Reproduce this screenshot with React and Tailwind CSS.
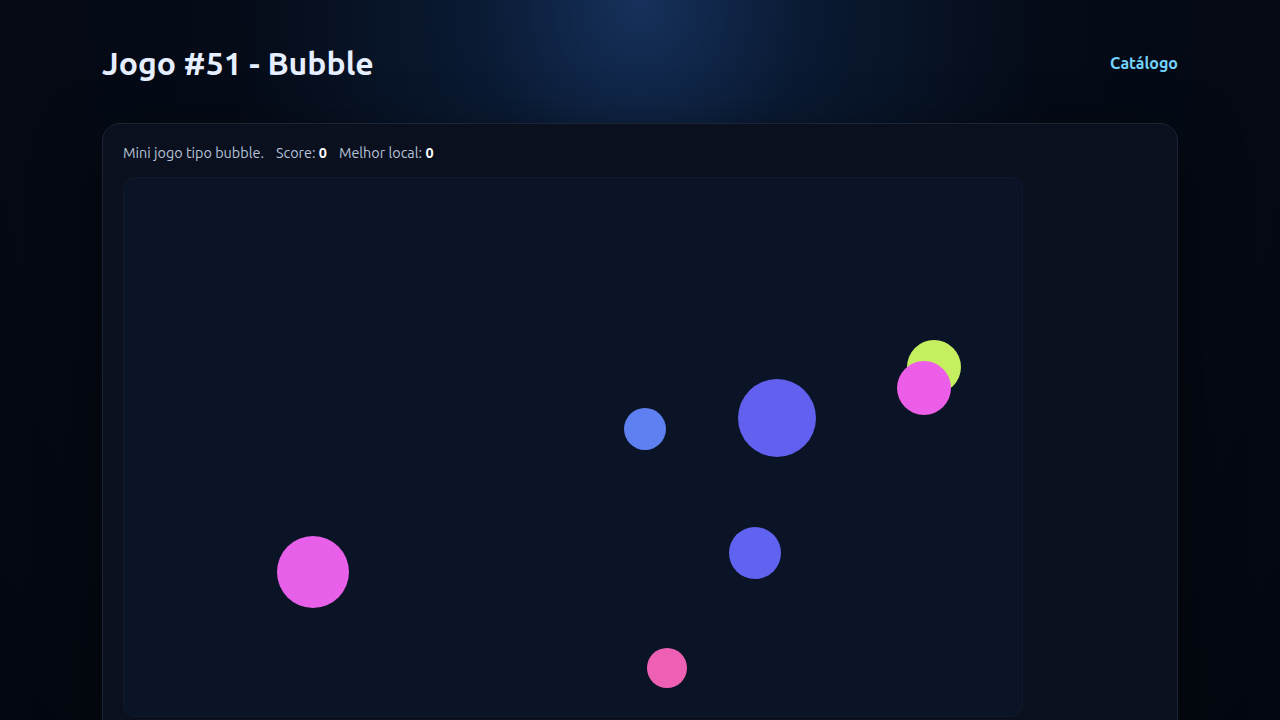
const bubbles = [
  { x: 189, y: 394, r: 36, c: '#e85fe9' },
  { x: 521, y: 251, r: 21, c: '#5f80f1' },
  { x: 653, y: 240, r: 39, c: '#6260ef' },
  { x: 810, y: 189, r: 27, c: '#c5ef60' },
  { x: 800, y: 210, r: 27, c: '#ec5de8' },
  { x: 631, y: 375, r: 26, c: '#6062f0' },
  { x: 543, y: 490, r: 20, c: '#ee60b4' },
];

export default function App() {
  return (
    <div className="min-h-screen bg-[#050b17] bg-[radial-gradient(ellipse_at_50%_0%,#16315c_0%,#0a1a33_18%,#050b17_45%,#03070f_100%)] font-['Ubuntu',sans-serif] text-slate-200">
      <div className="mx-auto w-[1076px] pt-[41px]">
        <header className="flex items-center justify-between h-[44px]">
          <h1 className="text-[32px] font-bold text-[#e6efff]">Jogo #51 - Bubble</h1>
          <a href="#" className="text-[16px] font-bold text-sky-300">Catálogo</a>
        </header>

        <div className="mt-[38px] rounded-[18px] border border-[#1c2436] bg-[#0a101e] px-5 pt-[19px] pb-5 shadow-[0_20px_60px_rgba(0,0,0,0.55)]">
          <p className="text-[14.4px] leading-5 text-[#b6c2d9]">
            Mini jogo tipo bubble.
            <span className="ml-3">Score: <b className="text-white">0</b></span>
            <span className="ml-3">Melhor local: <b className="text-white">0</b></span>
          </p>
          <div className="relative mt-[14px] h-[540px] w-[900px] overflow-hidden rounded-[12px] border border-[#111a2c] bg-[#0a1426]">
            {bubbles.map((b, i) => (
              <div
                key={i}
                className="absolute rounded-full"
                style={{ left: b.x - b.r, top: b.y - b.r, width: b.r * 2, height: b.r * 2, background: b.c }}
              />
            ))}
          </div>
        </div>
      </div>
    </div>
  );
}
